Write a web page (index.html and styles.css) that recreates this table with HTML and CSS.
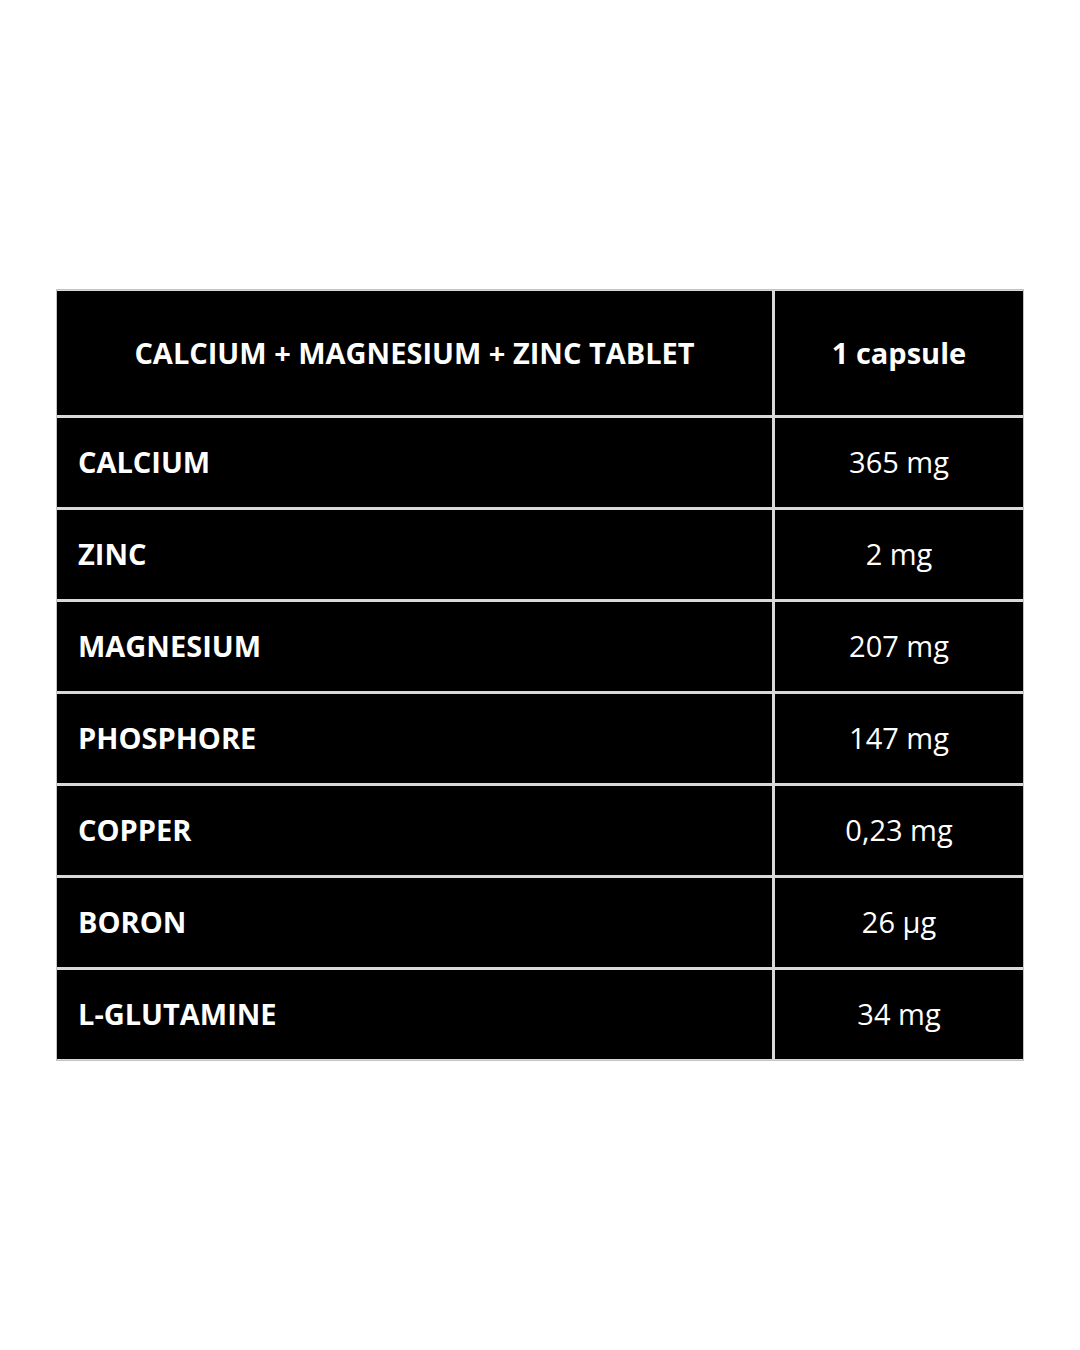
FILE: index.html
```html
<!DOCTYPE html>
<html>
<head>
<meta charset="utf-8">
<link rel="stylesheet" href="styles.css">
</head>
<body>
<div class="page">
  <div class="table">
    <div class="cell head">CALCIUM + MAGNESIUM + ZINC TABLET</div>
    <div class="cell head val-head">1 capsule</div>
    <div class="cell name">CALCIUM</div><div class="cell val">365 mg</div>
    <div class="cell name">ZINC</div><div class="cell val">2 mg</div>
    <div class="cell name">MAGNESIUM</div><div class="cell val">207 mg</div>
    <div class="cell name">PHOSPHORE</div><div class="cell val">147 mg</div>
    <div class="cell name">COPPER</div><div class="cell val">0,23 mg</div>
    <div class="cell name">BORON</div><div class="cell val">26 µg</div>
    <div class="cell name">L-GLUTAMINE</div><div class="cell val">34 mg</div>
  </div>
</div>
</body>
</html>
```
FILE: styles.css
```css
html, body {
  margin: 0;
  padding: 0;
  background: #ffffff;
}
body {
  font-family: "Open Sans", "Liberation Sans", sans-serif;
  width: 1080px;
  height: 1350px;
}
.page {
  padding-top: 290px;
  padding-left: 57px;
}
.table {
  width: 966px;
  display: grid;
  grid-template-columns: 715px 248px;
  grid-template-rows: 124px repeat(7, 89px);
  gap: 3px;
  background: #d9d9d9;
  padding: 1px 0 1px 0;
  box-sizing: border-box;
  outline: 1px solid #c4c4c4;
}
.cell {
  background: #000;
  color: #fff;
  display: flex;
  align-items: center;
  font-size: 29px;
  line-height: 1;
  padding-bottom: 2px;
  box-sizing: border-box;
}
.head {
  justify-content: center;
  font-weight: 700;
}
.name {
  font-weight: 700;
  padding-left: 21px;
}
.val {
  justify-content: center;
  font-weight: 400;
}
```
